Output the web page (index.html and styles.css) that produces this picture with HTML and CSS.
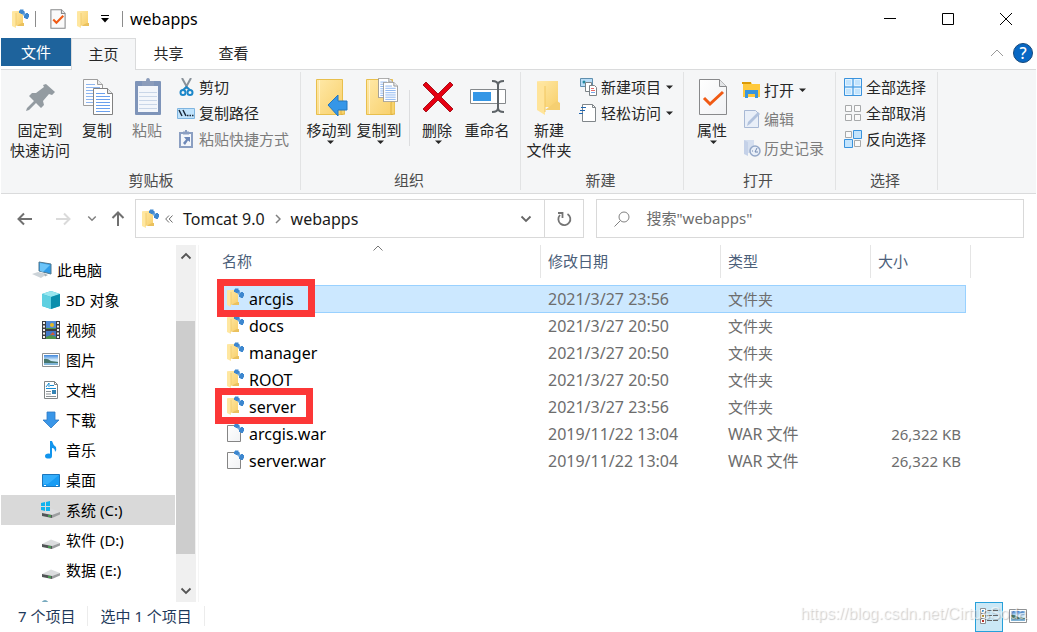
FILE: index.html
```html
<!DOCTYPE html>
<html lang="zh-CN">
<head>
<meta charset="utf-8">
<title>webapps</title>
<link rel="stylesheet" href="styles.css">
</head>
<body>
<svg class="sprite" aria-hidden="true">
  <defs>
    <linearGradient id="gold" x1="0" y1="0" x2="1" y2="1"><stop offset="0" stop-color="#ffe9a8"/><stop offset="1" stop-color="#f8d06c"/></linearGradient>
    <linearGradient id="paper" x1="0" y1="0" x2="1" y2="1"><stop offset="0" stop-color="#fff"/><stop offset="1" stop-color="#f1f2f4"/></linearGradient>
    <linearGradient id="sky" x1="0" y1="0" x2="0" y2="1"><stop offset="0" stop-color="#3f86dc"/><stop offset=".5" stop-color="#d7eefb"/><stop offset="1" stop-color="#8fc1e6"/></linearGradient>
    <symbol id="folder" viewBox="0 0 14 18"><path d="M2 1h10v14H5z" fill="url(#gold)"/><path d="M11 13h2v3H5z" fill="#eac15e"/><path d="M1 1l4 2v15l-4-2z" fill="#ffe7a0"/><path d="M5 3v13" stroke="#f2cd70" stroke-width="1"/></symbol>
    <symbol id="spark" viewBox="0 0 10 10"><path d="M2.500 2.500l5 5" stroke="#6fa9de" stroke-width="3"/><path d="M1 .500h3.500v1.500h1v2.500H3.500V5H1.500V4H0V1.500h1zM6 5h1V4h2v1h1v3.500H9V10H6.500V9H5V6.500h1z" fill="#3d87cf"/></symbol>
    <symbol id="tomfolder" viewBox="0 0 18 20"><use href="#folder" x="0" y="1" width="14" height="18"/><use href="#spark" x="8" y="0" width="10" height="10"/></symbol>
    <symbol id="warfile" viewBox="0 0 18 20"><path d="M1.500 2.500h9l4 4v12h-13z" fill="url(#paper)" stroke="#858585"/><use href="#spark" x="8" y="0" width="10" height="10"/></symbol>
    <symbol id="page-check" viewBox="0 0 30 38"><path d="M1.500 1.500h20l7 7v28h-27z" fill="url(#paper)" stroke="#88898b"/><path d="M21.500 1.500v7h7" fill="#e3e5e7" stroke="#88898b"/><path d="M6 20l6 6L25 14" fill="none" stroke="#f05a14" stroke-width="3"/></symbol>
    <symbol id="doc" viewBox="0 0 20 27"><path d="M.500.500h14l5 5v21H.500z" fill="#fff" stroke="#818181"/><path d="M14.500.500v5h5" fill="#e5e7e9" stroke="#818181"/><path d="M3 5.500h9M3 8.500h14M3 11.500h14M3 14.500h14M3 17.500h14M3 20.500h14M3 23.500h14" stroke="#6aa0ee"/></symbol>
    <symbol id="bigfolder" viewBox="0 0 30 38"><path d="M1.500 1.500h26v35h-26z" fill="url(#gold)" stroke="#e8bf4d"/><path d="M4.500 2v34" stroke="#fff2c8"/><path d="M26 36.500V25q0-2 2-2t2 2v11z" fill="#f7d36e" stroke="#e0b23f"/></symbol>
    <symbol id="caret" viewBox="0 0 7 4"><path d="M0 .500h7L3.500 4z" fill="currentColor"/></symbol>
    <symbol id="chev" viewBox="0 0 12 8"><path d="M1.500 1.500L6 6l4.500-4.500" fill="none" stroke="currentColor" stroke-width="1.800"/></symbol>
    <symbol id="hdd" viewBox="0 0 18 10"><path d="M0 5L9 0.500l9 3.500-8 3z" fill="#dcdddf"/><path d="M0 5l10 2v3L0 8z" fill="#515456"/><path d="M10 7l8-3v2.500L10 10z" fill="#9c9ea0"/><path d="M6 7.500h3v1H6z" fill="#3fe04b"/></symbol>
    <symbol id="picture" viewBox="0 0 18 14"><path d="M.500.500h17v13H.500z" fill="#fff" stroke="#8f9294"/><path d="M2 2h14v10H2z" fill="url(#sky)"/><path d="M2 6q3-1 7 2l7 1v1H2z" fill="#47776d"/><path d="M2 10h14v2H2z" fill="#82b6d9"/></symbol>
  </defs>
</svg>

<div class="window">
  <header class="titlebar">
    <svg class="i-tom" viewBox="0 0 18 20"><use href="#tomfolder"/></svg>
    <span class="tick"></span>
    <button class="bare quick-prop" aria-label="属性"><svg width="16" height="20" viewBox="0 0 30 38"><path d="M1.500 1.500h20l7 7v28h-27z" fill="#fafafa" stroke="#88898b" stroke-width="2"/><path d="M21.500 1.500v7h7" fill="#e3e5e7" stroke="#88898b" stroke-width="2"/><path d="M6 20l6 6L25 13" fill="none" stroke="#f05a14" stroke-width="4"/></svg></button>
    <button class="bare quick-new" aria-label="新建文件夹"><svg width="14" height="18"><use href="#folder"/></svg></button>
    <button class="bare quick-more" aria-label="自定义"><svg width="8" height="8" viewBox="0 0 8 8"><path d="M0 .500h8" stroke="#000"/><path d="M0 3h8L4 7.500z" fill="#000"/></svg></button>
    <span class="tick"></span>
    <h1 class="title">webapps</h1>
    <div class="controls">
      <button class="bare" aria-label="最小化"><svg width="14" height="14"><path d="M1 6.500h12" stroke="#000"/></svg></button>
      <button class="bare" aria-label="最大化"><svg width="14" height="14"><path d="M1.500 1.500h11v11h-11z" fill="none" stroke="#000"/></svg></button>
      <button class="bare" aria-label="关闭"><svg width="14" height="14"><path d="M1 1l12 12M13 1L1 13" stroke="#000"/></svg></button>
    </div>
  </header>

  <nav class="tabs">
    <button class="tab tab-file">文件</button>
    <button class="tab tab-active">主页</button>
    <button class="tab">共享</button>
    <button class="tab">查看</button>
    <div class="tab-tools">
      <button class="bare fold" aria-label="折叠功能区"><svg width="14" height="8"><path d="M1 7l6-6 6 6" fill="none" stroke="#9a9a9a" stroke-width="1"/></svg></button>
      <button class="bare help" aria-label="帮助">?</button>
    </div>
  </nav>

  <section class="ribbon">
    <div class="group g-clip">
      <div class="tools">
        <button class="big big-wide"><svg class="big-icon" viewBox="0 0 36 38"><path d="M23 6l9 8-3 3-3-1-6 7 1 4-3 3-5-5-7 7-3 1 1-3 7-7-5-5 3-3h4l8-6-1-2z" fill="#939ba1"/></svg><span>固定到<br>快速访问</span></button>
        <button class="big"><svg class="big-icon" viewBox="0 0 36 38"><use href="#doc" x="3" y="1" width="20" height="27" opacity=".75"/><use href="#doc" x="13" y="10" width="20" height="27"/></svg><span>复制</span></button>
        <button class="big" disabled><svg class="big-icon" viewBox="0 0 36 38"><path d="M6 3h24q1 0 1 1v32q0 1-1 1H6q-1 0-1-1V4q0-1 1-1z" fill="#7e94b9"/><path d="M8 8h20v26H8z" fill="#f3f6fb"/><path d="M9 14.500h18M9 18.500h18M9 22.500h18M9 26.500h18M9 30.500h18" stroke="#c9d6e8"/><path d="M12 3h4q0-3 2-3t2 3h4v5H12z" fill="#8b9cbb"/></svg><span>粘贴</span></button>
        <div class="stack">
          <button class="small"><svg width="20" height="18" viewBox="0 0 20 18"><path d="M5 0l6 11M14 0L8 11" stroke="#8a929a" stroke-width="2"/><circle cx="6" cy="14.500" r="2.500" fill="none" stroke="#1c87c9" stroke-width="2"/><circle cx="13" cy="14.500" r="2.500" fill="none" stroke="#1c87c9" stroke-width="2"/><path d="M6 12l3.500-3 3.500 3" stroke="#1c87c9" stroke-width="2" fill="none"/></svg>剪切</button>
          <button class="small"><svg width="20" height="18" viewBox="0 0 20 18"><path d="M.500 4.500h17v10h-17z" fill="#c0e3fc" stroke="#7fb5e0"/><path d="M2 6l3 6M6 6l3 6M10 11.500h1.500M12.500 11.500h1.500M15 11.500h1.500" stroke="#1a2b3c" stroke-width="1.500"/></svg>复制路径</button>
          <button class="small" disabled><svg width="20" height="18" viewBox="0 0 20 18"><path d="M3 3h12v14H3z" fill="#f4f7fb" stroke="#8b9fc2" stroke-width="2"/><path d="M6 1.500h6v3H6zM8 0h2v2H8z" fill="#8b9fc2"/><path d="M7 7h6v5l-2-1.500L8 15l-2-2 3-3.500z" fill="#6d88b8"/></svg>粘贴快捷方式</button>
        </div>
      </div>
      <div class="label">剪贴板</div>
    </div>

    <div class="group g-org">
      <div class="tools">
        <button class="big"><svg class="big-icon" viewBox="0 0 36 38"><use href="#bigfolder" x="3" y="0" width="30" height="38"/><path d="M16 27l10-10v6h9v9h-9v6z" fill="#3596e8" stroke="#2477bf" stroke-width="1"/></svg><span>移动到</span><svg class="caret"><use href="#caret"/></svg></button>
        <button class="big"><svg class="big-icon" viewBox="0 0 36 38"><use href="#bigfolder" x="3" y="0" width="30" height="38"/><use href="#doc" x="16" y="0" width="15" height="20"/><use href="#doc" x="21" y="4" width="15" height="20"/></svg><span>复制到</span><svg class="caret"><use href="#caret"/></svg></button>
        <span class="split"></span>
        <button class="big"><svg class="big-icon" viewBox="0 0 36 38"><path d="M6 4l12 12L30 4l3 3-12 12 12 12-3 3-12-12L6 34l-3-3 12-12L3 7z" fill="#e60012" stroke="#a8141d" stroke-width="1"/></svg><span>删除</span><svg class="caret"><use href="#caret"/></svg></button>
        <button class="big"><svg class="big-icon" viewBox="0 0 36 38"><path d="M.500 11.500h35v14H.500z" fill="#fff" stroke="#85898c"/><path d="M3 14h18v9H3z" fill="#3597e6"/><path d="M22 3q6 0 6 4v23q0 4-6 4M34 3q-6 0-6 4v23q0 4 6 4" fill="none" stroke="#5e6468" stroke-width="2"/></svg><span>重命名</span></button>
      </div>
      <div class="label">组织</div>
    </div>

    <div class="group g-new">
      <div class="tools">
        <button class="big"><svg class="big-icon" viewBox="0 0 36 38"><path d="M6 3h20v26H13z" fill="url(#gold)"/><path d="M25 23l3 2v7H13z" fill="#f5cf71"/><path d="M5 3l8 5v29l-8-5z" fill="#ffe49a"/><path d="M13 8v26" stroke="#f1c760"/></svg><span>新建<br>文件夹</span></button>
        <div class="stack">
          <button class="small"><svg width="20" height="20" viewBox="0 0 20 20"><path d="M1.500 1.500h12v8h-12z" fill="#b9ddf7" stroke="#5f8fae"/><circle cx="5" cy="5" r="1.500" fill="#248aa0"/><path d="M6.500 5.500h6v9h-6z" fill="#fff" stroke="#7b8286"/><path d="M10.500 8.500h5l2 2v8h-7z" fill="#fff" stroke="#7b8286"/><path d="M12 11.500h3M12 13.500h4" stroke="#e46b6b"/><path d="M12 15.500h4" stroke="#79a9e8"/></svg>新建项目<svg class="caret"><use href="#caret"/></svg></button>
          <button class="small"><svg width="20" height="20" viewBox="0 0 20 20"><path d="M3.500 1.500h10l3 3v14h-13z" fill="#fff" stroke="#80868a"/><path d="M13.500 1.500v3h3" fill="none" stroke="#80868a"/><path d="M2 4.500h5M1 7.500h5M0 10.500h4" stroke="#2167b0" stroke-width="1"/></svg>轻松访问<svg class="caret"><use href="#caret"/></svg></button>
        </div>
      </div>
      <div class="label">新建</div>
    </div>

    <div class="group g-open">
      <div class="tools">
        <button class="big"><svg class="big-icon" viewBox="0 0 36 38"><use href="#page-check" x="3" y="0" width="30" height="38"/></svg><span>属性</span><svg class="caret"><use href="#caret"/></svg></button>
        <div class="stack stack-loose">
          <button class="small"><svg width="20" height="18" viewBox="0 0 20 18"><path d="M1 1h8l1 2h8v13H1z" fill="#ffc93c"/><path d="M0 1h9v2H0z" fill="#dc9b07"/><path d="M3 9h13v8h-3v-4H6v4H3z" fill="#3995dc"/></svg>打开<svg class="caret"><use href="#caret"/></svg></button>
          <button class="small" disabled><svg width="20" height="18" viewBox="0 0 20 18"><path d="M2.500.500h11l3 3v14h-14z" fill="#e9eff8" stroke="#a8b9d5"/><path d="M5 16l1-4L16 2l2 2L8 14z" fill="#b1c2dd"/></svg>编辑</button>
          <button class="small" disabled><svg width="20" height="18" viewBox="0 0 20 18"><path d="M2 1h10v13H5z" fill="#d5dfef"/><path d="M2 1l4 2v14l-4-2z" fill="#c4d1e8"/><circle cx="13" cy="12" r="5" fill="#e9eff8" stroke="#94a8c8" stroke-width="1.500"/><path d="M15 9l-2 4h3M10 12h1" fill="none" stroke="#7088b0"/></svg>历史记录</button>
        </div>
      </div>
      <div class="label">打开</div>
    </div>

    <div class="group g-select">
      <div class="tools">
        <div class="stack">
          <button class="small"><svg width="20" height="20" viewBox="0 0 20 20"><path d="M.500 1.500h17v17H.500zM9 1.500v17M.500 10h17" fill="#c3e4fd" stroke="#3a93dd"/><path d="M1.500 2.500h6v6h-6zM10.500 2.500h6v6h-6zM1.500 11.500h6v6h-6zM10.500 11.500h6v6h-6z" fill="#c3e4fd" stroke="#e4f3fe"/></svg>全部选择</button>
          <button class="small"><svg width="20" height="20" viewBox="0 0 20 20"><path d="M1.500 2.500h6v6h-6zM10.500 2.500h6v6h-6zM1.500 11.500h6v6h-6zM10.500 11.500h6v6h-6z" fill="#fafafa" stroke="#a7a9aa"/></svg>全部取消</button>
          <button class="small"><svg width="20" height="20" viewBox="0 0 20 20"><path d="M1.500 2.500h6v6h-6zM10.500 11.500h6v6h-6z" fill="#fafafa" stroke="#a7a9aa"/><path d="M9.500 1.500h8v8h-8zM.500 10.500h8v8h-8z" fill="#c3e4fd" stroke="#3a93dd"/></svg>反向选择</button>
        </div>
      </div>
      <div class="label">选择</div>
    </div>
  </section>

  <div class="navrow">
    <div class="arrows">
      <button class="bare" aria-label="后退"><svg width="16" height="14"><path d="M15 7H1.500M7 1.500L1.500 7 7 12.500" fill="none" stroke="#707070" stroke-width="2"/></svg></button>
      <button class="bare" aria-label="前进"><svg width="16" height="14"><path d="M1 7h13.500M9 1.500L14.500 7 9 12.500" fill="none" stroke="#dadada" stroke-width="2"/></svg></button>
      <button class="bare recent" aria-label="最近"><svg width="10" height="7"><use href="#chev"/></svg></button>
      <button class="bare" aria-label="向上"><svg width="14" height="16"><path d="M7 15V1.500M1.500 7L7 1.500 12.500 7" fill="none" stroke="#707070" stroke-width="2"/></svg></button>
    </div>
    <div class="address">
      <svg class="i-tom" viewBox="0 0 18 20"><use href="#tomfolder"/></svg>
      <svg class="back-crumbs" width="8" height="8"><path d="M4 .500L.700 4 4 7.500M7.500.500L4.200 4l3.300 3.500" fill="none" stroke="#6d6d6d"/></svg>
      <a class="crumb" href="#">Tomcat 9.0</a>
      <svg class="sep" width="6" height="10"><path d="M1 1l4 4-4 4" fill="none" stroke="#808080" stroke-width="1.500"/></svg>
      <a class="crumb" href="#">webapps</a>
      <button class="bare drop" aria-label="历史位置"><svg width="12" height="8"><use href="#chev"/></svg></button>
      <button class="bare refresh" aria-label="刷新"><svg width="16" height="16" viewBox="0 0 16 16"><path d="M4 4a6 6 0 1 0 7.500-1M2 2h4.500v5" fill="none" stroke="#747474" stroke-width="1.800"/></svg></button>
    </div>
    <label class="search">
      <svg width="16" height="16"><circle cx="10" cy="6" r="5" fill="none" stroke="#818181"/><path d="M6.500 9.500L.500 15.500" stroke="#818181"/></svg>
      <input type="search" placeholder='搜索"webapps"' aria-label="搜索">
    </label>
  </div>

  <main class="content">
    <aside class="sidebar">
      <ul class="tree">
        <li class="node root"><svg viewBox="0 0 20 18"><path d="M7 1l12 2v10L7 10z" fill="#2e9be8" stroke="#50788f"/><path d="M8 2l10 2-7 7-3-1z" fill="#6cc4f8"/><path d="M0 13l6-2 9 2-6 4z" fill="#ccd3d8"/><path d="M12 12.500l4 1.500-3 1.500" fill="#a6b1b8"/></svg>此电脑</li>
        <li class="node"><svg viewBox="0 0 20 18"><path d="M1 3l9-3 9 3v12l-9 3-9-3z" fill="#2bb3cd"/><path d="M1 3l9-3 9 3-9 3z" fill="#98e6ef"/><path d="M10 6l9-3v12l-9 3z" fill="#0a8eac"/><path d="M1 3l9 3v12l-9-3z" fill="#5fd0e1"/></svg>3D 对象</li>
        <li class="node"><svg viewBox="0 0 20 18"><path d="M1 0h18v18H1z" fill="#3b3c40"/><path d="M5 0h10v8H5z" fill="#518bd5"/><path d="M5 10h10v8H5z" fill="#4278c6"/><circle cx="11" cy="4" r="2" fill="#e4bb24"/><path d="M5 7h10v1H5zM5 16l5-2 5 2v2H5z" fill="#4f9348"/><path d="M9 14l3-3 2 3z" fill="#d05a36"/><path d="M3 1v16M17 1v16" stroke="#f1f1f1" stroke-width="2" stroke-dasharray="2 1.500"/></svg>视频</li>
        <li class="node"><svg viewBox="0 0 20 18"><use href="#picture" x="1" y="2" width="18" height="14"/></svg>图片</li>
        <li class="node"><svg viewBox="0 0 20 18"><path d="M3.500.500h10l3 3v14h-13z" fill="#fff" stroke="#808586"/><path d="M13.500.500v3h3" fill="none" stroke="#808586"/><path d="M5 6l3-4v4M9 4.500h4M5 7.500h10" stroke="#178bd2" fill="none"/><path d="M5 10.500h5M5 13h5M5 15.500h10" stroke="#8a9195"/><path d="M11 9h4v4h-4z" fill="#3584b5"/></svg>文档</li>
        <li class="node"><svg viewBox="0 0 20 18"><path d="M6 1h8v8h4l-8 8-8-8h4z" fill="#3996e8" stroke="#2e7ac4" stroke-width=".800"/></svg>下载</li>
        <li class="node"><svg viewBox="0 0 20 18"><ellipse cx="7.500" cy="15" rx="3.500" ry="2.600" fill="#1295ed"/><path d="M9 0h2q1 4 4 6 1 3-1 5 0-4-3-4v8H9z" fill="#1295ed"/></svg>音乐</li>
        <li class="node"><svg viewBox="0 0 20 18"><path d="M1.500 3.500h17v12h-17z" fill="#189cf4" stroke="#1b76bd"/><path d="M2 4h16L7 13H2z" fill="#34aefb"/><path d="M3 14.500h2M15 14.500h2" stroke="#fff"/></svg>桌面</li>
        <li class="node selected"><svg viewBox="0 0 20 18"><use href="#hdd" x="1" y="7" width="18" height="10"/><path d="M0 2l4-1v4H0zM5 1l4-1v5H5zM0 6h4v4L0 9zM5 6h4v4H5z" fill="#10b2ee"/></svg>系统 (C:)</li>
        <li class="node"><svg viewBox="0 0 20 18"><use href="#hdd" x="1" y="8" width="18" height="10"/></svg>软件 (D:)</li>
        <li class="node"><svg viewBox="0 0 20 18"><use href="#hdd" x="1" y="8" width="18" height="10"/></svg>数据 (E:)</li>
        <li class="node"><svg viewBox="0 0 20 18"><path d="M0 12q4-6 8 0z" fill="#78aabf"/></svg></li>
      </ul>
      <div class="scroll">
        <button class="bare scroll-btn" aria-label="向上滚动"><svg class="flip" width="12" height="8"><use href="#chev"/></svg></button>
        <div class="track"><div class="thumb"></div></div>
        <button class="bare scroll-btn" aria-label="向下滚动"><svg width="12" height="8"><use href="#chev"/></svg></button>
      </div>
    </aside>

    <section class="files">
      <table class="list">
        <colgroup><col><col class="c-date"><col class="c-type"><col class="c-size"><col class="c-end"></colgroup>
        <thead><tr><th class="h-name">名称<svg class="sort" width="10" height="6"><path d="M.500 5.500L5 1l4.500 4.500" fill="none" stroke="#777"/></svg></th><th>修改日期</th><th>类型</th><th class="h-size">大小</th><td class="h-end"></td></tr></thead>
        <tbody>
          <tr class="picked"><td class="name"><div class="entry"><svg><use href="#tomfolder"/></svg>arcgis</div><span class="mark mark-a"></span></td><td class="latin">2021/3/27 23:56</td><td>文件夹</td><td></td></tr>
          <tr><td class="name"><div class="entry"><svg><use href="#tomfolder"/></svg>docs</div></td><td class="latin">2021/3/27 20:50</td><td>文件夹</td><td></td></tr>
          <tr><td class="name"><div class="entry"><svg><use href="#tomfolder"/></svg>manager</div></td><td class="latin">2021/3/27 20:50</td><td>文件夹</td><td></td></tr>
          <tr><td class="name"><div class="entry"><svg><use href="#tomfolder"/></svg>ROOT</div></td><td class="latin">2021/3/27 20:50</td><td>文件夹</td><td></td></tr>
          <tr><td class="name"><div class="entry"><svg><use href="#tomfolder"/></svg>server</div><span class="mark mark-b"></span></td><td class="latin">2021/3/27 23:56</td><td>文件夹</td><td></td></tr>
          <tr><td class="name"><div class="entry"><svg><use href="#warfile"/></svg>arcgis.war</div></td><td class="latin">2019/11/22 13:04</td><td class="latin">WAR 文件</td><td class="size">26,322 KB</td></tr>
          <tr><td class="name"><div class="entry"><svg><use href="#warfile"/></svg>server.war</div></td><td class="latin">2019/11/22 13:04</td><td class="latin">WAR 文件</td><td class="size">26,322 KB</td></tr>
        </tbody>
      </table>
    </section>
  </main>

  <footer class="status">
    <span class="stat">7 个项目</span>
    <span class="stat">选中 1 个项目</span>
    <div class="views">
      <button class="bare view view-on" aria-label="详细信息"><svg width="20" height="18" viewBox="0 0 20 18"><path d="M1.500 1.500h5v5h-5zM1.500 6.500h5v5h-5zM1.500 11.500h5v5h-5z" fill="#fff" stroke="#8b8f92"/><path d="M3 3h2v2H3z" fill="#4a87c0"/><path d="M3 8h2v2H3z" fill="#b08b2d"/><path d="M3 13h2v2H3z" fill="#b8322a"/><path d="M8 3.500h5M14 3.500h5M8 8.500h5M14 8.500h5M8 13.500h5M14 13.500h5" stroke="#666"/></svg></button>
      <button class="bare view" aria-label="大图标"><svg width="18" height="14"><use href="#picture"/></svg></button>
    </div>
    <span class="watermark">https://blog.csdn.net/CirtusSoda</span>
  </footer>
</div>
</body>
</html>
```

FILE: styles.css
```css
* { box-sizing: border-box; }

body {
  margin: 0;
  background: #fff;
  color: #262626;
  font: 15px/20px "Noto Sans", "Noto Sans CJK SC", sans-serif;
}

button, input { font: inherit; color: inherit; }
button { background: none; border: 0; padding: 0; }
svg { display: block; flex: none; }
.sprite { position: absolute; width: 0; height: 0; }
.window { display: flex; flex-direction: column; min-height: 100vh; padding: 0 1px; }
.bare { display: flex; align-items: center; justify-content: center; }
.i-tom { width: 18px; height: 20px; }
.caret { width: 7px; height: 4px; }

/* Title bar */
.titlebar { display: flex; align-items: center; height: 38px; padding-left: 10px; }
.tick { width: 1px; height: 16px; margin-left: 6px; background: #8c8c8c; }
.quick-prop { margin-left: 14px; }
.quick-new { margin-left: 10px; }
.quick-more { margin: 0 7px 0 11px; }
.title { margin: 0 0 0 7px; font-size: 16px; font-weight: 400; color: #000; }
.controls { display: flex; gap: 44px; margin-left: auto; padding-right: 23px; }

/* Tabs */
.tabs { display: flex; height: 31px; position: relative; z-index: 1; }
.tab { width: 65px; height: 31px; padding-bottom: 2px; }
.tab-file { width: 70px; height: 28px; padding: 0; background: #1e639c; color: #fff; }
.tab-active { height: 32px; border: 1px solid #dadbdc; border-bottom: 0; background: #f5f6f7; }
.tab-tools { display: flex; align-items: center; gap: 9px; margin-left: auto; padding: 0 3px 2px 0; }
.help { width: 20px; height: 20px; border: 1px solid #16497c; border-radius: 50%; background: #0868c4; color: #fff; font-size: 16px; font-weight: 500; }

/* Ribbon */
.ribbon { display: flex; height: 125px; padding-top: 2px; border: 1px solid #dadbdc; border-width: 1px 0; background: #f5f6f7; }
.group { display: flex; flex-direction: column; height: 118px; padding: 4px 3px 0; border-right: 1px solid #e2e3e4; }
.g-clip { width: 300px; padding-left: 7px; }
.g-org { width: 220px; }
.g-new { width: 163px; }
.g-open { width: 152px; }
.g-select { width: 102px; }
.tools { display: flex; flex: 1; }
.big { display: flex; flex-direction: column; align-items: center; width: 50px; white-space: nowrap; }
.big-wide { width: 64px; }
.big-icon { width: 36px; height: 38px; margin: 2px 0 4px 2px; }
.big .caret { margin-left: 2px; }
.big:disabled, .small:disabled { color: #7c7c7c; }
.split { width: 1px; height: 56px; margin: 14px 2px 0 5px; background: #dcdddf; }
.stack { display: flex; flex-direction: column; padding-left: 5px; }
.stack-loose { gap: 3px; padding-top: 3px; }
.small { display: flex; align-items: center; gap: 2px; height: 26px; margin-top: -2px; margin-bottom: 2px; white-space: nowrap; }
.small .caret { margin-left: 3px; }
.label { height: 20px; padding-right: 3px; text-align: center; color: #4c4c4c; }

/* Address row */
.navrow { display: flex; align-items: center; height: 51px; padding: 0 12px 2px 16px; }
.arrows { display: flex; align-items: center; justify-content: space-between; width: 108px; color: #808080; }
.recent { margin: 0 -8px 0 -6px; }
.address { display: flex; align-items: center; flex: 456; height: 39px; margin: 0 12px 0 10px; padding-left: 5px; border: 1px solid #d9d9d9; }
.back-crumbs { margin: 0 10px 0 6px; }
.crumb { color: #1a1a1a; font-size: 16px; text-decoration: none; }
.sep { margin: 0 10px; }
.drop { width: 36px; height: 37px; margin-left: auto; color: #666; }
.refresh { width: 39px; height: 37px; border-left: 1px solid #d9d9d9; }
.search { display: flex; align-items: center; gap: 16px; flex: 421; height: 39px; padding-left: 17px; border: 1px solid #d9d9d9; }
.search input { flex: 1; min-width: 0; padding: 0 0 2px; border: 0; outline: 0; background: none; }
.search input::placeholder { color: #6d6d6d; opacity: 1; }

/* Folder tree */
.content { display: flex; height: 357px; }
.sidebar { display: flex; width: 198px; overflow: hidden; border-right: 1px solid #f5f5f5; }
.tree { flex: 1; margin: 0; padding: 10px 0 0; list-style: none; color: #000; }
.node { display: flex; align-items: center; gap: 5px; height: 30px; padding-left: 40px; }
.node svg { width: 20px; height: 18px; }
.root { padding-left: 31px; }
.selected { background: #d9d9d9; }
.scroll { display: flex; flex-direction: column; width: 20px; margin: 0 2px 0 1px; background: #f0f0f0; color: #555; }
.scroll-btn { height: 22px; }
.flip { transform: rotate(180deg); }
.track { display: flex; flex: 1; padding-top: 54px; }
.thumb { width: 19px; height: 233px; background: #cdcdcd; }

/* File list */
.files { flex: 1; padding-left: 18px; }
.list { width: 754px; border-spacing: 0; table-layout: fixed; color: #6d6d6d; }
.c-date { width: 180px; }
.c-type { width: 150px; }
.c-size { width: 95px; }
.c-end { width: 5px; }
.list th, .list td { height: 27px; padding: 0 0 2px 7px; text-align: left; font-weight: 400; }
.list th, .list .h-end { height: 33px; border-right: 1px solid #e5e5e5; color: #4c607a; }
.list .h-name { position: relative; padding-left: 5px; }
.list .h-size { border-right: 0; }
.list .h-end { padding: 0; }
.sort { position: absolute; top: 0; left: 50%; margin-left: -6px; }
.list tbody::before { content: ""; display: block; height: 7px; }
.list .name { position: relative; padding-left: 9px; color: #000; font-size: 16px; }
.entry { display: flex; align-items: center; gap: 5px; height: 20px; }
.entry svg { width: 18px; height: 20px; margin-bottom: 2px; }
.list .latin { font-size: 16px; }
.list .size { padding: 0 5px 2px 0; text-align: right; }
.list .picked td { height: 28px; padding-bottom: 0; border: 1px solid #99d1ff; border-width: 1px 0; background: #cce8ff; }
.list .picked td:last-child { border-right-width: 1px; }
.mark { position: absolute; z-index: 1; width: 98px; border: 7px solid #fc3737; }
.mark-a { top: -7px; left: 0; height: 38px; }
.mark-b { top: -6px; left: -2px; height: 36px; }

/* Status bar */
.status { display: flex; align-items: center; position: relative; height: 30px; padding-left: 5px; color: #1e395b; }
.stat { height: 20px; margin-bottom: 2px; padding: 0 12px; border-right: 1px solid #ececec; }
.views { display: flex; gap: 1px; margin-left: auto; padding-right: 4px; }
.view { width: 28px; height: 30px; padding-bottom: 2px; }
.view-on { border: 1px solid #26a0da; background: #cbe8f6; }
.watermark { position: absolute; right: 9px; top: 2px; color: rgba(255, 255, 255, .6); font: 16px/20px "Liberation Sans", sans-serif; text-shadow: 1px 1px 1px rgba(0, 0, 0, .2); }
```
